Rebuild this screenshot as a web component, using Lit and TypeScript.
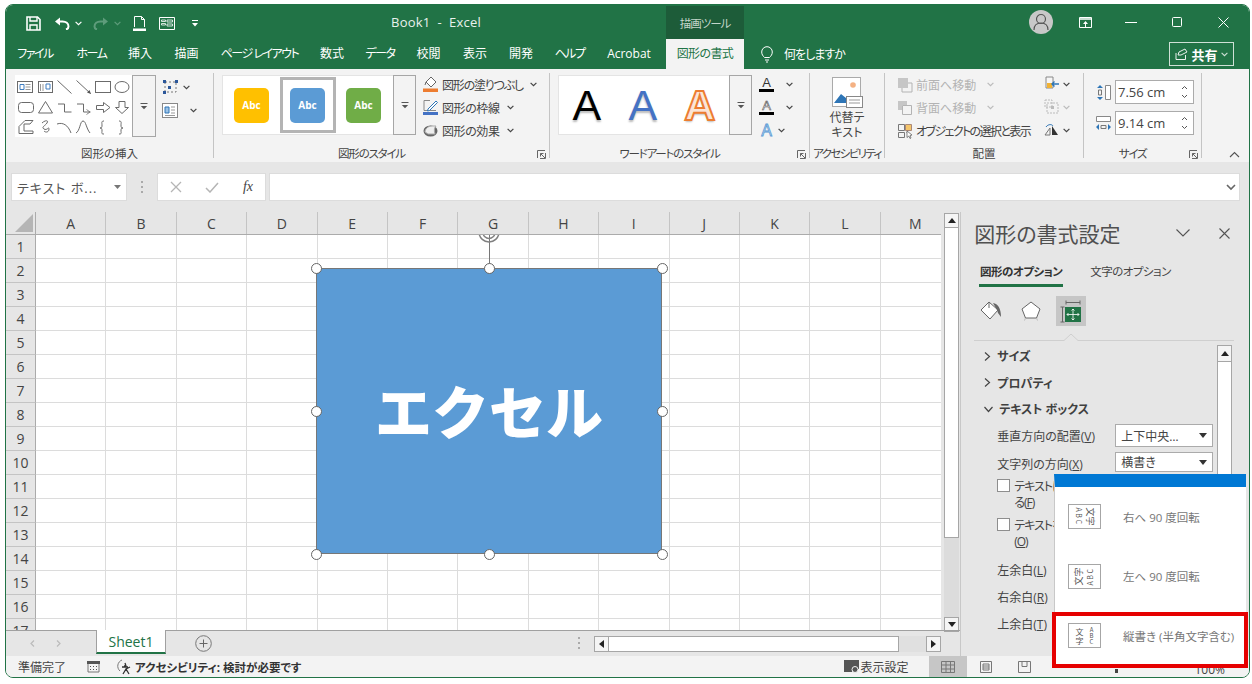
import { LitElement, html, css, svg } from "lit";
import { customElement } from "lit/decorators.js";

const chev = (c = "#444") => html`<svg class="chev" width="7" height="5" viewBox="0 0 7 5"><path d="M.6 .8l2.900 2.900 2.900-2.900" fill="none" stroke=${c} stroke-width="1.200"/></svg>`;
const more = html`<svg width="8" height="7" viewBox="0 0 8 7"><path d="M.5 .5h7" stroke="#555"/><path d="M.8 3h6.400L4 6.200z" fill="#555"/></svg>`;
const launcher = html`<svg class="launch" width="9" height="9" viewBox="0 0 9 9"><path d="M.5 8V.5H8M8.500 8.500H3M8.500 8.500V3M8 8L3.500 3.500M3.500 6.500v-3h3" fill="none" stroke="#666"/></svg>`;

const shapes = svg`<g fill="none" stroke="#6b6b6b">
  <rect x="2.500" y="6.500" width="15" height="11" fill="#fff"/><path d="M5 9.500h4v5H5z" stroke="#3f7dc0"/><path d="M10.500 9.500h5M10.500 12h5M10.500 14.500h5" stroke="#999"/>
  <rect x="23.500" y="6.500" width="14" height="11" fill="#fff"/><path d="M31 9h4v5h-4z" stroke="#3f7dc0"/><path d="M25.500 9v7M28 9v7" stroke="#999"/>
  <path d="M42.500 5.500l14 13"/><path d="M61.500 5.500l14 13"/><path d="M76 19l-1.500-4-2.500 2.500z" fill="#555" stroke="none"/>
  <rect x="80.500" y="6.500" width="15" height="11"/><ellipse cx="107" cy="12" rx="7" ry="5.500"/>
  <rect x="3.500" y="27.500" width="15" height="10" rx="3"/><path d="M30.500 26.500l7 11.500h-14z"/>
  <path d="M43 29h6.500v8h7"/><path d="M62 29h6.500v8h7"/><path d="M71.500 34.500l3.500 2.500-3.500 2.500" stroke-width=".8"/>
  <path d="M81.500 30.500h7v-3l6.500 5-6.500 5v-3h-7z"/><path d="M104 26.500h6v6h3.500l-6.500 6-6.500-6h3.500z"/>
  <path d="M4 58.500v-7l6-6h8l-3 3.500h-6v7h9v2.500z" stroke-linejoin="round"/>
  <path d="M27 48c3-3 7-3 5 0s-6 4-3 6 5-3 5 0-3 4-5 2" />
  <path d="M42 49c6-2 11 1 14 9"/><path d="M61 58c4-2 4-12 7-12s3 7 7 12"/>
  <path d="M89 46c-3 0-2 2-2 4s0 3-2 3c2 0 2 1 2 3s-1 3 2 3"/><path d="M104 46c3 0 2 2 2 4s0 3 2 3c-2 0-2 1-2 3s1 3-2 3"/>
</g>`;

@customElement("xl-ribbon")
class XlRibbon extends LitElement {
  static styles = css`
    :host { display: flex; height: 93px; background: #f3f3f3; color: #444; font-size: 12px; }
    svg { flex: none; }
    .group { box-sizing: border-box; height: 85px; margin-top: 4px; padding-top: 2px; display: flex; flex-direction: column; border-right: 1px solid #c4c4c4; }
    .g1 { width: 208px; padding-left: 9px; }
    .g2 { width: 336px; padding-left: 8px; }
    .g3 { width: 260px; padding-left: 8px; }
    .g4 { width: 75px; }
    .g5 { width: 199px; padding-left: 12px; }
    .g6 { width: 118px; padding-left: 12px; }
    .content { flex: 1; display: flex; min-height: 0; }
    .label { height: 16px; line-height: 16px; margin-bottom: -4px; padding-top: 1px; display: flex; align-items: center; font-size: 11.500px; white-space: nowrap; }
    .label span { flex: 1; text-align: center; }
    .label .k { letter-spacing: -1.200px; }
    .g4 .label .k { letter-spacing: -1.600px; }
    .launch { margin: 0 3px 0 8px; }
    .g1 .label { margin-left: -9px; }
    .g2 .label, .g3 .label { margin-left: -8px; }
    .g5 .label, .g6 .label { margin-left: -12px; }
    .gallery { display: flex; background: #fff; border: 1px solid #e4e4e4; border-right: 0; box-sizing: border-box; }
    .shape-gal { width: 117px; height: 62px; padding: 0; border: 0; }
    .style-gal { width: 171px; height: 60px; align-items: center; padding-left: .5px; }
    .art-gal { width: 171px; height: 60px; align-items: center; justify-content: space-around; }
    .drop { box-sizing: border-box; width: 24px; display: flex; align-items: center; justify-content: center; border: 1px solid #a6a6a6; background: #f3f3f3; }
    .drop.h62 { height: 62px; }
    .drop.h60 { height: 60px; width: 23px; }
    .cell { box-sizing: border-box; width: 56px; height: 56px; display: flex; align-items: center; justify-content: center; border: 3px solid transparent; }
    .cell.sel { border-color: #b4b4b4; }
    .tile { width: 35px; height: 35px; border-radius: 5px; color: #fff; font: 700 10px "Open Sans", sans-serif; display: flex; align-items: center; justify-content: center; }
    .yellow { background: #ffc000; }
    .blue { background: #5b9bd5; }
    .green { background: #70ad47; }
    .side1 { margin-left: 6px; display: grid; grid-template-rows: 24px 22px; align-content: start; }
    .side1 div { display: flex; align-items: center; gap: 4px; }
    .side1 .wide { gap: 12px; }
    .list { margin: -2px 0 0 6px; display: flex; flex-direction: column; }
    .line { height: 23px; display: flex; align-items: center; gap: 3px; white-space: nowrap; }
    .line .chev { margin-left: 4px; }
    .line.off { color: #b3b3b3; }
    .t1 { letter-spacing: -1.200px; }
    .t2 { letter-spacing: -.4px; }
    .t3 { letter-spacing: -1.600px; }
    .g3 .line .chev { margin-left: 7.500px; }
    .g3 .line.last .chev { margin-left: 0; }
    .g5 .list { margin-left: 0; }
    .g5 .first { width: 147px; }
    .g5 .list .chev { margin-left: 0; }
    .g5 .first .line .chev { margin-left: auto; margin-right: 50px; }
    .art { font: 400 43px "Liberation Sans", sans-serif; line-height: 60px; text-shadow: 0 2px 2px #bbb; }
    .a1 { color: #000; }
    .a2 { color: #4472c4; }
    .a3 { color: #fbe5d6; -webkit-text-stroke: 2px #ed7d31; font-weight: 700; }
    .alt { width: 100%; display: flex; flex-direction: column; align-items: center; line-height: 15px; text-align: center; padding-top: 2px; }
    .alt svg { margin-bottom: 2px; }
    .sizes { display: flex; flex-direction: column; gap: 7px; margin-top: 5px; }
    .size { display: flex; align-items: center; gap: 4px; }
    .box { box-sizing: border-box; width: 79px; height: 24px; border: 1px solid #ababab; background: #fff; font: 13px "Open Sans", sans-serif; display: flex; align-items: center; justify-content: space-between; padding: 0 5px 0 2px; }
    .collapse { margin: 82px 0 0 27px; }
  `;
  render() {
    return html`
      <div class="group g1">
        <div class="content">
          <div class="gallery shape-gal"><svg width="117" height="62" viewBox="0 0 117 62">${shapes}</svg></div>
          <div class="drop h62">${more}</div>
          <div class="side1">
            <div><svg width="17" height="16" viewBox="0 0 17 16"><path d="M3 3h11v10H3z" fill="none" stroke="#777" stroke-dasharray="2 2"/><path d="M1 1h3v3H1zM13 1h3v3h-3zM1 12h3v3H1zM6 7h3v3H6z" fill="#2b579a"/></svg>${chev()}</div>
            <div class="wide"><svg width="16" height="15" viewBox="0 0 16 15"><rect x=".5" y=".5" width="15" height="14" fill="#fff" stroke="#888"/><path d="M3 4h4v6H3z" fill="#9cc3e6" stroke="#2e75b6"/><path d="M9 4h4M9 7h4M9 10h4M3 12.500h10" stroke="#999"/></svg>${chev()}</div>
          </div>
        </div>
        <div class="label"><span>図形の挿入</span></div>
      </div>
      <div class="group g2">
        <div class="content">
          <div class="gallery style-gal">
            <div class="cell"><div class="tile yellow">Abc</div></div>
            <div class="cell sel"><div class="tile blue">Abc</div></div>
            <div class="cell"><div class="tile green">Abc</div></div>
          </div>
          <div class="drop h60">${more}</div>
          <div class="list">
            <div class="line"><svg width="17" height="17" viewBox="0 0 17 17"><path d="M9 1l5 5-5 5-5-5z" fill="#fff" stroke="#666"/><path d="M4 6l-1 3" stroke="#666"/><path d="M1 12.500h15V16H1z" fill="#ed7d31"/></svg><span class="t1">図形の塗りつぶし</span>${chev()}</div>
            <div class="line"><svg width="17" height="17" viewBox="0 0 17 17"><path d="M2 1.500v10M2 11.500h12M2 1.500h6" stroke="#888" fill="none"/><path d="M6 10l8-8 1.500 1.500-8 8-2 .5z" fill="#fff" stroke="#2e75b6"/><path d="M1 13h15v3H1z" fill="#4472c4"/></svg><span class="t2">図形の枠線</span>${chev()}</div>
            <div class="line"><svg width="17" height="17" viewBox="0 0 17 17"><ellipse cx="8.500" cy="9" rx="7" ry="5.500" fill="#666"/><path d="M3 10c0-3 3-6 7-6h4c-2 2-2 5-1 8H6z" fill="#eee" stroke="#aaa"/></svg><span class="t2">図形の効果</span>${chev()}</div>
          </div>
        </div>
        <div class="label"><span class="k">図形のスタイル</span>${launcher}</div>
      </div>
      <div class="group g3">
        <div class="content">
          <div class="gallery art-gal"><span class="art a1">A</span><span class="art a2">A</span><span class="art a3">A</span></div>
          <div class="drop h60">${more}</div>
          <div class="list">
            <div class="line"><svg width="17" height="17" viewBox="0 0 17 17"><text x="8.500" y="11" font-size="13" font-family="Liberation Sans" text-anchor="middle" fill="#333">A</text><path d="M1 13h15v3H1z" fill="#000"/></svg>${chev()}</div>
            <div class="line"><svg width="17" height="17" viewBox="0 0 17 17"><text x="8.500" y="11" font-size="13" font-family="Liberation Sans" text-anchor="middle" fill="#fff" stroke="#555" stroke-width=".6">A</text><path d="M1 13h15v3H1z" fill="#000"/></svg>${chev()}</div>
            <div class="line last"><svg width="17" height="17" viewBox="0 0 17 17"><text x="8.500" y="14" font-size="16" font-family="Liberation Sans" text-anchor="middle" fill="#dbe9f6" stroke="#5b9bd5" stroke-width=".8">A</text></svg>${chev()}</div>
          </div>
        </div>
        <div class="label"><span class="k">ワードアートのスタイル</span>${launcher}</div>
      </div>
      <div class="group g4">
        <div class="content">
          <div class="alt">
            <svg width="31" height="31" viewBox="0 0 31 31"><rect x=".5" y=".5" width="28" height="29" fill="#fff" stroke="#aaa"/><circle cx="21" cy="8" r="2.800" fill="#f4b183"/><path d="M2 26l7-9 5 4 3-2 4 7z" fill="#2e75b6"/><rect x="14.500" y="19.500" width="16" height="11" fill="#fff" stroke="#888"/><path d="M17 23h11M17 26h11" stroke="#999"/></svg>
            <span>代替テ<br />キスト</span>
          </div>
        </div>
        <div class="label"><span class="k">アクセシビリティ</span></div>
      </div>
      <div class="group g5">
        <div class="content">
          <div class="list first">
            <div class="line off"><svg width="16" height="16" viewBox="0 0 16 16"><path d="M1 1h10v10H1z" fill="#c6c6c6"/><path d="M11 6h4v9H5v-4" fill="none" stroke="#b3b3b3"/></svg>前面へ移動${chev("#bbb")}</div>
            <div class="line off"><svg width="16" height="16" viewBox="0 0 16 16"><path d="M1 1h9v4H5v5H1z" fill="#c6c6c6"/><path d="M5.500 5.500h9v9h-9z" fill="none" stroke="#b3b3b3"/></svg>背面へ移動${chev("#bbb")}</div>
            <div class="line"><svg width="16" height="16" viewBox="0 0 16 16"><path d="M1.500 1.500h6v6h-6zM1.500 9.500h6v5h-6zM9.500 9.500h1" fill="none" stroke="#777"/><path d="M8.500 1.500h6v6h-6z" fill="#f4c56a" stroke="#a87"/><path d="M10 8l5 4-2 .5 1 2.500-1 .5-1.200-2.500-1.800 1.500z" fill="#fff" stroke="#555" stroke-width=".7"/></svg><span class="t3">オブジェクトの選択と表示</span></div>
          </div>
          <div class="list">
            <div class="line"><svg width="16" height="17" viewBox="0 0 16 17"><path d="M2 1h7v11H2z" fill="#f6f6f6" stroke="#888"/><path d="M3 7h5v5H3z" fill="#f2b233"/><path d="M15 8H8m2.500-2.500L8 8l2.500 2.500" stroke="#2e75b6" stroke-width="1.400" fill="none"/></svg>${chev()}</div>
            <div class="line off"><svg width="16" height="17" viewBox="0 0 16 17"><path d="M3 4h11v10H3zM1 1h7v7H1z" fill="none" stroke="#bbb" stroke-dasharray="2 1"/><path d="M7 7h3v3H7z" fill="#bbb"/></svg>${chev("#bbb")}</div>
            <div class="line"><svg width="16" height="17" viewBox="0 0 16 17"><path d="M1 13l5-7v7z" fill="none" stroke="#777"/><path d="M8 13V4l6 9z" fill="#333"/><path d="M2 5c2-3 6-3 7-1" stroke="#2e75b6" fill="none"/></svg>${chev()}</div>
          </div>
        </div>
        <div class="label"><span>配置</span></div>
      </div>
      <div class="group g6">
        <div class="content">
          <div class="sizes">
            <div class="size">
              <svg width="15" height="17" viewBox="0 0 15 17"><path d="M9.500 1.500h5v14h-5z" fill="#fff" stroke="#888"/><path d="M4 1l3 3H1zM4 16l3-3H1z" fill="#2e75b6"/><path d="M2.500 6h3v5h-3z" fill="none" stroke="#777"/></svg>
              <div class="box"><span>7.56 cm</span>${this.spin()}</div>
            </div>
            <div class="size">
              <svg width="15" height="17" viewBox="0 0 15 17"><path d="M.500 1.500h14v5H.500z" fill="#fff" stroke="#888"/><path d="M0 12l3-3v6zM15 12l-3-3v6z" fill="#2e75b6"/><path d="M5 10.500h5v3H5z" fill="none" stroke="#777"/></svg>
              <div class="box"><span>9.14 cm</span>${this.spin()}</div>
            </div>
          </div>
        </div>
        <div class="label"><span class="k">サイズ</span>${launcher}</div>
      </div>
      <svg class="collapse" width="11" height="7" viewBox="0 0 11 7"><path d="M1 6l4.500-4.500L10 6" fill="none" stroke="#555" stroke-width="1.100"/></svg>
    `;
  }
  spin() {
    return html`<svg width="7" height="14" viewBox="0 0 7 14"><path d="M1 4l2.500-2.500L6 4M1 10l2.500 2.500L6 10" fill="none" stroke="#555"/></svg>`;
  }
}

const colNames = "ABCDEFGHIJKLM".split("");
const rowNums = Array.from({ length: 17 }, (_, i) => i + 1);
const handles = ["h-tl", "h-tc", "h-tr", "h-ml", "h-mr", "h-bl", "h-bc", "h-br"];

@customElement("xl-sheet")
class XlSheet extends LitElement {
  static styles = css`
    :host { display: flex; flex-direction: column; width: 955px; height: 444px; box-sizing: content-box; border-right: 1px solid #c8c8c8; background: #e6e6e6; }
    .top { flex: 1; display: flex; min-height: 0; }
    .gridwrap { width: 935px; display: flex; flex-direction: column; }
    .colhead { height: 23px; display: flex; box-sizing: border-box; border-bottom: 1px solid #ababab; font: 14px "Open Sans", sans-serif; color: #444; flex: none; overflow: hidden; }
    .corner { flex: none; width: 30px; box-sizing: border-box; border-right: 1px solid #ababab; display: flex; align-items: flex-end; justify-content: flex-end; padding: 0 2px 2px 0; }
    .colhead .c { flex: none; width: 70.400px; box-sizing: border-box; text-align: center; line-height: 23px; border-right: 1px solid #c4c4c4; }
    .body { position: relative; flex: 1; overflow: hidden; background: #fff; }
    .row { display: flex; height: 24px; box-sizing: border-box; }
    .num { flex: none; width: 30px; box-sizing: border-box; background: #e6e6e6; border-right: 1px solid #ababab; border-bottom: 1px solid #c4c4c4; font: 14px "Open Sans", sans-serif; color: #444; text-align: center; line-height: 24px; }
    .cell { flex: none; width: 70.400px; box-sizing: border-box; border-right: 1px solid #dcdcdc; border-bottom: 1px solid #dcdcdc; }
    .shape { position: absolute; left: 310px; top: 33px; width: 346px; height: 286px; box-sizing: border-box; padding-bottom: 4px; background: #5b9bd5; border: 1px solid #8a9aa8; outline: 1px solid #777; outline-offset: -1px; display: flex; align-items: center; justify-content: center; color: #fff; font-weight: 900; font-size: 57px; font-feature-settings: normal; white-space: nowrap; }
    .stem { position: absolute; left: 483px; top: 0; width: 1px; height: 33px; background: #777; }
    .rot { position: absolute; left: 472px; top: -14px; }
    .handle { position: absolute; width: 11px; height: 11px; box-sizing: border-box; background: #fff; border: 1.500px solid #666; border-radius: 50%; }
    .h-tl { left: 305px; top: 28px; }
    .h-tc { left: 478px; top: 28px; }
    .h-tr { left: 651px; top: 28px; }
    .h-ml { left: 305px; top: 171px; }
    .h-mr { left: 651px; top: 171px; }
    .h-bl { left: 305px; top: 314px; }
    .h-bc { left: 478px; top: 314px; }
    .h-br { left: 651px; top: 314px; }
    .vbar { width: 15px; margin: 1px 0 -2px 3px; display: flex; flex-direction: column; flex: none; background: #dcdcdc; }
    .btn { box-sizing: border-box; height: 15px; flex: none; border: 1px solid #a6a6a6; background: #f5f5f5; display: flex; align-items: center; justify-content: center; }
    .thumb { box-sizing: border-box; height: 310px; background: #fff; border: 1px solid #a6a6a6; border-width: 0 1px 1px; }
    .fill { flex: 1; }
    .tabs { height: 26px; flex: none; box-sizing: border-box; border-top: 1px solid #a0a0a0; display: flex; align-items: flex-start; }
    .nav { width: 90px; height: 25px; display: flex; align-items: center; padding-left: 24px; gap: 21px; box-sizing: border-box; }
    .sheet { box-sizing: border-box; width: 70px; height: 24px; margin-top: -1px; background: #fff; border: 1px solid #a0a0a0; border-top: 0; border-bottom: 2px solid #217346; color: #217346; font: 14px "Open Sans", sans-serif; text-align: center; line-height: 23px; }
    .plus { margin: 4px 0 0 29px; }
    .dots { margin: 6px 0 0 366px; }
    .hbar { display: flex; margin: 5px 0 0 13px; height: 16px; }
    .hbar .btn { width: 15px; height: 16px; }
    .htrack { box-sizing: border-box; width: 290px; background: #fff; border: 1px solid #a6a6a6; border-left: 0; }
    .hrest { width: 27px; background: #e0e0e0; }
  `;
  render() {
    return html`
      <div class="top">
        <div class="gridwrap">
          <div class="colhead">
            <div class="corner"><svg width="18" height="18" viewBox="0 0 18 18"><path d="M18 0v18H0z" fill="#b5b5b5"/></svg></div>
            ${colNames.map((c) => html`<div class="c">${c}</div>`)}
          </div>
          <div class="body">
            ${rowNums.map((r) => html`<div class="row"><div class="num">${r}</div>${colNames.map(() => html`<div class="cell"></div>`)}</div>`)}
            <div class="stem"></div>
            <svg class="rot" width="22" height="24" viewBox="0 0 22 24"><path d="M3 5a10 10 0 1 0 16 0M6.500 7.500a6 6 0 1 0 9 0" fill="none" stroke="#808080" stroke-width="1.500"/></svg>
            <div class="shape">エクセル</div>
            ${handles.map((h) => html`<div class="handle ${h}"></div>`)}
          </div>
        </div>
        <div class="vbar">
          <div class="btn"><svg width="8" height="5" viewBox="0 0 8 5"><path d="M4 0l4 5H0z" fill="#222"/></svg></div>
          <div class="thumb"></div>
          <div class="fill"></div>
          <div class="btn"><svg width="8" height="5" viewBox="0 0 8 5"><path d="M4 5l4-5H0z" fill="#222"/></svg></div>
        </div>
      </div>
      <div class="tabs">
        <div class="nav">
          <svg width="5" height="7" viewBox="0 0 5 7"><path d="M4 .5L1 3.500 4 6.500" fill="none" stroke="#bbb" stroke-width="1.200"/></svg>
          <svg width="5" height="7" viewBox="0 0 5 7"><path d="M1 .5L4 3.500 1 6.500" fill="none" stroke="#bbb" stroke-width="1.200"/></svg>
        </div>
        <div class="sheet">Sheet1</div>
        <svg class="plus" width="17" height="17" viewBox="0 0 17 17"><circle cx="8.500" cy="8.500" r="7.800" fill="none" stroke="#777"/><path d="M8.500 4.500v8M4.500 8.500h8" stroke="#666"/></svg>
        <svg class="dots" width="3" height="12" viewBox="0 0 3 12"><path d="M0 0h2v2H0zM0 5h2v2H0zM0 10h2v2H0z" fill="#aaa"/></svg>
        <div class="hbar">
          <div class="btn"><svg width="5" height="8" viewBox="0 0 5 8"><path d="M0 4l5-4v8z" fill="#222"/></svg></div>
          <div class="htrack"></div>
          <div class="hrest"></div>
          <div class="btn"><svg width="5" height="8" viewBox="0 0 5 8"><path d="M5 4L0 0v8z" fill="#222"/></svg></div>
        </div>
      </div>
    `;
  }
}

@customElement("xl-pane")
class XlPane extends LitElement {
  static styles = css`
    :host { display: block; width: 288px; height: 444px; overflow: hidden; box-sizing: border-box; padding-left: 13px; background: #e6e6e6; color: #444; font-size: 12px; }
    .head { height: 46px; margin-top: -2px; padding-bottom: 2px; display: flex; align-items: center; font-size: 21px; color: #505050; }
    .head span { width: 202px; flex: none; white-space: nowrap; }
    .head svg { margin-right: 29px; flex: none; }
    .head svg:last-child { margin-right: 0; }
    .opt { display: flex; height: 30px; padding-left: 5px; gap: 27px; font-size: 11.500px; }
    .opt div { height: 29px; width: 84px; box-sizing: border-box; line-height: 27px; white-space: nowrap; letter-spacing: -.5px; }
    .opt .on { border-bottom: 3px solid #217346; font-weight: 700; color: #333; text-align: center; }
    .icons { display: flex; align-items: center; height: 30px; margin: 8px 0 0 2px; gap: 10px; }
    .icons div { width: 30px; height: 30px; display: flex; align-items: center; justify-content: center; }
    .icons .on { background: #c6c6c6; }
    .rule { position: relative; width: 260px; height: 1px; margin-top: 14px; background: #cfcfcf; }
    .rule svg { position: absolute; left: 90px; top: -6px; }
    .list { display: flex; margin-top: 2px; }
    .items { width: 243px; flex: none; }
    .sec { height: 26.500px; display: flex; align-items: center; gap: 6px; padding-left: 10px; font-weight: 700; font-size: 12px; color: #404040; }
    .field { display: flex; align-items: center; padding-left: 23px; white-space: nowrap; }
    .field > span:first-child { width: 118px; flex: none; }
    .f1 { height: 26px; }
    .f2 { height: 30px; }
    .f3 { height: 27px; }
    .sel { box-sizing: border-box; width: 98px; height: 23px; border: 1px solid #ababab; background: #fff; display: flex; align-items: center; justify-content: space-between; padding: 0 5px; font-size: 12px; }
    .f2 .sel { height: 20px; margin-top: -3px; }
    u { text-underline-offset: 1px; }
    .check { display: flex; gap: 4px; padding-left: 23px; line-height: 16px; white-space: nowrap; height: 39px; letter-spacing: -1px; }
    .check i { width: 13px; height: 13px; background: #fff; border: 1px solid #8e8e8e; box-sizing: border-box; flex: none; }
    .pbar { width: 15px; margin-top: 2px; height: 200px; flex: none; background: #fff; border: 1px solid #a6a6a6; box-sizing: border-box; }
    .pbar div { height: 15px; background: #f5f5f5; border-bottom: 1px solid #a6a6a6; display: flex; align-items: center; justify-content: center; }
  `;
  render() {
    return html`
      <div class="head">
        <span>図形の書式設定</span>
        <svg width="14" height="8" viewBox="0 0 14 8"><path d="M.5 .5L7 7l6.500-6.500" fill="none" stroke="#555" stroke-width="1.100"/></svg>
        <svg width="11" height="11" viewBox="0 0 11 11"><path d="M.5 .5l10 10M10.500 .5l-10 10" stroke="#555" stroke-width="1.100"/></svg>
      </div>
      <div class="opt"><div class="on">図形のオプション</div><div>文字のオプション</div></div>
      <div class="icons">
        <div><svg width="24" height="22" viewBox="0 0 24 22"><path d="M2 10l8-8 9 8-8 9z" fill="#fff" stroke="#666"/><path d="M10 2v6" stroke="#666"/><path d="M14 3c5 1 8 5 8 14l-3-4-1-3z" fill="#666"/></svg></div>
        <div><svg width="20" height="20" viewBox="0 0 20 20"><path d="M10 1l9 7-3.500 9h-11L1 8z" fill="#fff" stroke="#666"/><path d="M4.500 17l-1 2.500M15.500 17l1 2.500" stroke="#bbb"/></svg></div>
        <div class="on"><svg width="30" height="30" viewBox="0 0 30 30"><path d="M10 6.500h14M10 4.500v4M24 4.500v4M6.500 11v15M4.500 11h4M4.500 26h4" fill="none" stroke="#666"/><rect x="9" y="11" width="16" height="15" fill="#217346"/><path d="M17 13v11M11 18.500h12M15.500 14.500l1.500-1.500 1.500 1.500M15.500 22.500l1.500 1.500 1.500-1.500M12.500 17l-1.500 1.500 1.500 1.500M21.500 17l1.500 1.500-1.500 1.500" fill="none" stroke="#fff" stroke-width=".8"/></svg></div>
      </div>
      <div class="rule"><svg width="14" height="7" viewBox="0 0 14 7"><path d="M0 7h14V6.500L7 0 0 6.500z" fill="#e6e6e6"/><path d="M0 6.500L7 0l7 6.500" fill="none" stroke="#cfcfcf"/></svg></div>
      <div class="list">
        <div class="items">
          <div class="sec"><svg width="7" height="9" viewBox="0 0 7 9"><path d="M1 .5l4.500 4-4.500 4" fill="none" stroke="#444" stroke-width="1.200"/></svg>サイズ</div>
          <div class="sec"><svg width="7" height="9" viewBox="0 0 7 9"><path d="M1 .5l4.500 4-4.500 4" fill="none" stroke="#444" stroke-width="1.200"/></svg>プロパティ</div>
          <div class="sec"><svg width="9" height="7" viewBox="0 0 9 7"><path d="M.5 1l4 4.500 4-4.500" fill="none" stroke="#444" stroke-width="1.200"/></svg>テキスト ボックス</div>
          <div class="field f1"><span>垂直方向の配置(<u>V</u>)</span><div class="sel">上下中央…<svg width="8" height="5" viewBox="0 0 8 5"><path d="M0 0h8L4 5z" fill="#333"/></svg></div></div>
          <div class="field f2"><span>文字列の方向(<u>X</u>)</span><div class="sel">横書き<svg width="8" height="5" viewBox="0 0 8 5"><path d="M0 0h8L4 5z" fill="#333"/></svg></div></div>
          <div class="check"><i></i><span>テキストに合わせて図形のサイズを調整す<br />る(<u>F</u>)</span></div>
          <div class="check"><i></i><span>テキストを図形からはみ出して表示する<br />(<u>O</u>)</span></div>
          <div class="field f3"><span>左余白(<u>L</u>)</span></div>
          <div class="field f3"><span>右余白(<u>R</u>)</span></div>
          <div class="field f3"><span>上余白(<u>T</u>)</span></div>
        </div>
        <div class="pbar"><div><svg width="8" height="5" viewBox="0 0 8 5"><path d="M4 0l4 5H0z" fill="#222"/></svg></div></div>
      </div>
    `;
  }
}

const tabs = [
  { t: "ファイル", k: true },
  { t: "ホーム", k: true },
  { t: "挿入" },
  { t: "描画" },
  { t: "ページ レイアウト", k: true },
  { t: "数式" },
  { t: "データ", k: true },
  { t: "校閲" },
  { t: "表示" },
  { t: "開発" },
  { t: "ヘルプ", k: true },
  { t: "Acrobat" },
];

@customElement("app-root")
export class AppRoot extends LitElement {
  static styles = css`
    :host { display: block; height: 684px; background: #fff; font-family: "Open Sans", "Noto Sans CJK JP", sans-serif; font-feature-settings: "palt"; }
    .window { position: relative; box-sizing: border-box; margin-left: 5px; top: 4px; width: 1245px; height: 674px; border: 1px solid #217346; border-radius: 8px; overflow: hidden; background: #f3f3f3; display: flex; flex-direction: column; }
    svg { flex: none; }
    .title { height: 34px; flex: none; display: flex; align-items: center; background: #217346; color: #fff; font-size: 13px; }
    .qat { display: grid; grid-template-columns: 28px 21px 18px 21px 19px 26px 33px 10px; width: 176px; padding: 3px 0 0 20px; align-items: center; flex: none; }
    .name { width: 468px; text-align: center; flex: none; opacity: .9; letter-spacing: .2px; }
    .ctx { width: 78px; height: 33px; margin: 1px 0 0 -4px; background: #1d5c39; color: #c3d6ca; font-size: 11.500px; letter-spacing: -1px; display: flex; align-items: center; justify-content: center; flex: none; }
    .ctrl { margin-left: auto; display: flex; align-items: center; padding-right: 3px; }
    .ava { width: 24px; height: 24px; border-radius: 50%; background: #c8c8c8; margin-right: 9px; display: flex; align-items: center; justify-content: center; }
    .ctrl .b { width: 46px; display: flex; justify-content: center; }
    .tabs { height: 30px; flex: none; display: flex; background: #217346; color: #fff; font-size: 12px; }
    .tablist { display: grid; grid-template-columns: 56px 57px 40px 53px 93px 52px 44px 53px 40px 52px 45px 74px 78px; padding-left: 1px; flex: none; }
    .tablist div { text-align: center; line-height: 30px; white-space: nowrap; }
    .tablist .k { letter-spacing: -1.500px; }
    .tablist .active { background: #f3f3f3; color: #217346; letter-spacing: -.6px; }
    .tell { display: flex; align-items: center; gap: 11px; margin-left: 17px; letter-spacing: -1px; }
    .share { box-sizing: border-box; margin: 3px 15px 3px auto; width: 65px; height: 24px; border: 1px solid #cfe0d6; display: flex; align-items: center; justify-content: center; gap: 3px; font-size: 13px; font-weight: 700; }
    .formula { height: 50px; flex: none; box-sizing: border-box; padding: 11px 9px 11px 5px; display: flex; background: #e6e6e6; }
    .namebox { box-sizing: border-box; width: 116px; height: 28px; background: #fff; border: 1px solid #dcdcdc; display: flex; align-items: center; justify-content: space-between; padding: 0 5px; font-size: 13px; color: #555; letter-spacing: 1px; white-space: nowrap; }
    .fdots { width: 30px; display: flex; align-items: center; justify-content: center; }
    .fbtns { box-sizing: border-box; width: 109px; height: 28px; background: #fff; border: 1px solid #dcdcdc; display: grid; grid-template-columns: repeat(3, 36px); align-items: center; justify-items: center; }
    .fx { font: italic 14px "Liberation Serif", serif; color: #444; }
    .finput { box-sizing: border-box; flex: 1; height: 28px; margin-left: 3px; background: #fff; border: 1px solid #dcdcdc; display: flex; align-items: center; justify-content: flex-end; padding-right: 3px; }
    .main { flex: none; height: 444px; display: flex; }
    .status { height: 21px; flex: none; display: flex; align-items: center; background: #f3f3f3; color: #444; font-size: 12px; padding-left: 12px; }
    .status .ready { width: 69px; }
    .status .acc { display: flex; align-items: center; gap: 2px; margin-left: 16px; font-weight: 700; font-size: 11.500px; color: #333; }
    .view { margin-left: auto; display: flex; align-items: center; height: 21px; }
    .disp { display: flex; align-items: center; gap: 1px; margin-right: 21px; }
    .vb { width: 38px; height: 21px; display: flex; align-items: center; justify-content: center; }
    .vb.on { background: #c6c6c6; }
    .knob { width: 3px; height: 4px; margin: 8px 0 0 72px; background: #444; }
    .pct { margin: 0 24px 0 76px; font-size: 12px; padding-top: 6px; }
    .popup { position: absolute; left: 1048px; top: 469px; width: 192px; height: 193px; box-sizing: border-box; background: #fff; border-left: 1px solid #c8c8c8; border-top: 13px solid #0078d4; font-size: 11.500px; color: #777; }
    .item { height: 59.500px; display: flex; align-items: center; padding-left: 13px; gap: 22px; white-space: nowrap; }
    .ico { box-sizing: border-box; width: 33px; height: 25px; flex: none; border: 1px solid #a6a6a6; background: #fff; color: #555; font: 9px/11px "Noto Sans CJK JP", sans-serif; font-feature-settings: normal; display: flex; align-items: center; justify-content: center; overflow: hidden; }
    .rot { display: block; white-space: nowrap; text-align: center; }
    .abc { font-size: 7px; letter-spacing: 1.500px; }
    .r90 { transform: rotate(90deg); }
    .r270 { transform: rotate(-90deg); }
    .ver { display: flex; gap: 6px; align-items: center; }
    .ver span { font-size: 8px; line-height: 9px; text-align: center; }
    .ver span + span { font-size: 6px; line-height: 6px; }
    .red { position: absolute; left: 1046px; top: 607px; width: 196px; height: 56px; box-sizing: border-box; border: 4px solid #e60000; }
  `;
  render() {
    return html`
      <div class="window">
        <div class="title">
          <div class="qat">
            <svg width="15" height="15" viewBox="0 0 15 15"><path d="M1 1h10.500L14 3.500V14H1z" fill="none" stroke="#fff" stroke-width="1.600"/><path d="M4 1v4h7V1M4 14V9h7v5" fill="none" stroke="#fff" stroke-width="1.400"/></svg>
            <svg width="16" height="13" viewBox="0 0 16 13"><path d="M1 4.500L6 .5v8z" fill="#fff"/><path d="M5 4.500h3.500c3.500 0 6 2 6 5 0 1.500-1 2.500-2.500 3" fill="none" stroke="#fff" stroke-width="2"/></svg>
            ${chev("#fff")}
            <svg width="16" height="13" viewBox="0 0 16 13"><path d="M15 4.500L10 .5v8z" fill="#5e9c7b"/><path d="M11 4.500H7.500c-3.500 0-6 2-6 5 0 1.500 1 2.500 2.500 3" fill="none" stroke="#5e9c7b" stroke-width="2"/></svg>
            ${chev("#5e9c7b")}
            <svg width="13" height="16" viewBox="0 0 13 16"><path d="M1.500 11V.5h7l3 3V11M8.500 .5v3h3" fill="none" stroke="#fff"/><path d="M0 12.500h13V15H0z" fill="#fff"/></svg>
            <svg width="16" height="13" viewBox="0 0 16 13"><path d="M.5 .5h15v12H.5z" fill="none" stroke="#fff"/><path d="M2.500 3h4v1.500h-4zM8 3h5.500v2H8zM8 7h5.500v2H8zM2.500 6.500h4V8h-4z" fill="none" stroke="#fff" stroke-width=".8"/></svg>
            <svg width="6" height="7" viewBox="0 0 6 7"><path d="M0 .5h6" stroke="#fff"/><path d="M0 3h6L3 6.500z" fill="#fff"/></svg>
          </div>
          <div class="name">Book1&nbsp; -&nbsp; Excel</div>
          <div class="ctx">描画ツール</div>
          <div class="ctrl">
            <div class="ava"><svg width="16" height="18" viewBox="0 0 16 18"><circle cx="8" cy="6" r="4.500" fill="none" stroke="#555" stroke-width="1.200"/><path d="M1 17c0-5 3-7 7-7s7 2 7 7" fill="none" stroke="#555" stroke-width="1.200"/></svg></div>
            <div class="b"><svg width="13" height="11" viewBox="0 0 13 11"><path d="M.5 .5h12v10H.5z" fill="none" stroke="#fff"/><path d="M0 2h13" stroke="#fff" stroke-width="1.500"/><path d="M6.500 4l2.500 3H4z M6 7h1v3H6z" fill="#fff"/></svg></div>
            <div class="b"><svg width="12" height="1" viewBox="0 0 12 1"><path d="M0 .5h12" stroke="#fff"/></svg></div>
            <div class="b"><svg width="10" height="10" viewBox="0 0 10 10"><rect x=".5" y=".5" width="9" height="9" rx="1" fill="none" stroke="#fff"/></svg></div>
            <div class="b"><svg width="11" height="11" viewBox="0 0 11 11"><path d="M.5 .5l10 10M10.500 .5l-10 10" stroke="#fff"/></svg></div>
          </div>
        </div>
        <div class="tabs">
          <div class="tablist">
            ${tabs.map((t) => html`<div class=${t.k ? "k" : ""}>${t.t}</div>`)}
            <div class="active">図形の書式</div>
          </div>
          <div class="tell">
            <svg width="12" height="17" viewBox="0 0 12 17"><path d="M3.500 11.500C2 10 .7 8.500.7 6a5.300 5.300 0 0 1 10.600 0c0 2.500-1.300 4-2.800 5.500zM4 14h4M5 16h2" fill="none" stroke="#fff"/></svg>
            <span>何をしますか</span>
          </div>
          <div class="share">
            <svg width="13" height="12" viewBox="0 0 13 12"><path d="M1 5v6.500h9.500V7M3 7l1-3 6-3 2 3-6 3z" fill="none" stroke="#fff" stroke-width=".9"/></svg>
            共有
            <svg width="7" height="5" viewBox="0 0 7 5"><path d="M.6 .8l2.900 2.900 2.900-2.900" fill="none" stroke="#cfe0d6" stroke-width="1.100"/></svg>
          </div>
        </div>
        <xl-ribbon></xl-ribbon>
        <div class="formula">
          <div class="namebox"><span>テキスト ボ...</span><svg width="7" height="4" viewBox="0 0 7 4"><path d="M0 0h7L3.500 4z" fill="#777"/></svg></div>
          <div class="fdots"><svg width="3" height="12" viewBox="0 0 3 12"><path d="M0 0h2v2H0zM0 5h2v2H0zM0 10h2v2H0z" fill="#aaa"/></svg></div>
          <div class="fbtns">
            <svg width="12" height="12" viewBox="0 0 12 12"><path d="M1 1l10 10M11 1L1 11" stroke="#b5b5b5" stroke-width="1.300"/></svg>
            <svg width="14" height="11" viewBox="0 0 14 11"><path d="M1 6l4 4 8-9" fill="none" stroke="#b5b5b5" stroke-width="1.500"/></svg>
            <span class="fx">fx</span>
          </div>
          <div class="finput"><svg width="10" height="7" viewBox="0 0 10 7"><path d="M1 1l4 4 4-4" fill="none" stroke="#666" stroke-width="1.600"/></svg></div>
        </div>
        <div class="main">
          <xl-sheet></xl-sheet>
          <xl-pane></xl-pane>
        </div>
        <div class="status">
          <span class="ready">準備完了</span>
          <svg width="13" height="13" viewBox="0 0 13 13"><path d="M1 3h11v9H1z" fill="none" stroke="#777"/><path d="M0 1h13v3H0z" fill="#555"/><path d="M3 6h1v1H3zM6 6h1v1H6zM9 6h1v1H9zM3 9h1v1H3zM6 9h1v1H6zM9 9h1v1H9z" fill="#555"/></svg>
          <span class="acc">
            <svg width="17" height="16" viewBox="0 0 17 16"><path d="M6 1a6.500 6.500 0 0 0-2 11" fill="none" stroke="#777"/><path d="M9 4l1 3h-2M6 8h6M7 15l3-5 3 5M10 10l4-2" fill="none" stroke="#333" stroke-width="1.300"/></svg>
            アクセシビリティ: 検討が必要です
          </span>
          <div class="view">
            <div class="disp"><svg width="15" height="13" viewBox="0 0 15 13"><path d="M0 0h15v9H8v3H0z" fill="#555"/><circle cx="11" cy="9.500" r="3" fill="#555" stroke="#f3f3f3"/></svg>表示設定</div>
            <div class="vb on"><svg width="14" height="12" viewBox="0 0 14 12"><path d="M.5 .5h13v11H.5zM.5 4h13M.5 8h13M5 .5v11M9.500 .5v11" fill="none" stroke="#777"/></svg></div>
            <div class="vb"><svg width="12" height="12" viewBox="0 0 12 12"><path d="M.5 .5h11v11H.5zM3 3h6v6H3zM3 5h6M3 7h6" fill="none" stroke="#777"/></svg></div>
            <div class="vb"><svg width="13" height="12" viewBox="0 0 13 12"><path d="M.5 .5h12v11H.5zM4 .5v5h5v-5" fill="none" stroke="#777"/></svg></div>
            <div class="knob"></div>
            <span class="pct">100%</span>
          </div>
        </div>
        <div class="popup">
          <div class="item"><div class="ico"><span class="rot r90">文字<br /><span class="abc">ABC</span></span></div>右へ 90 度回転</div>
          <div class="item"><div class="ico"><span class="rot r270">文字<br /><span class="abc">ABC</span></span></div>左へ 90 度回転</div>
          <div class="item"><div class="ico"><div class="ver"><span>文<br />字</span><span>A<br />B<br />C</span></div></div>縦書き (半角文字含む)</div>
        </div>
        <div class="red"></div>
      </div>
    `;
  }
}
